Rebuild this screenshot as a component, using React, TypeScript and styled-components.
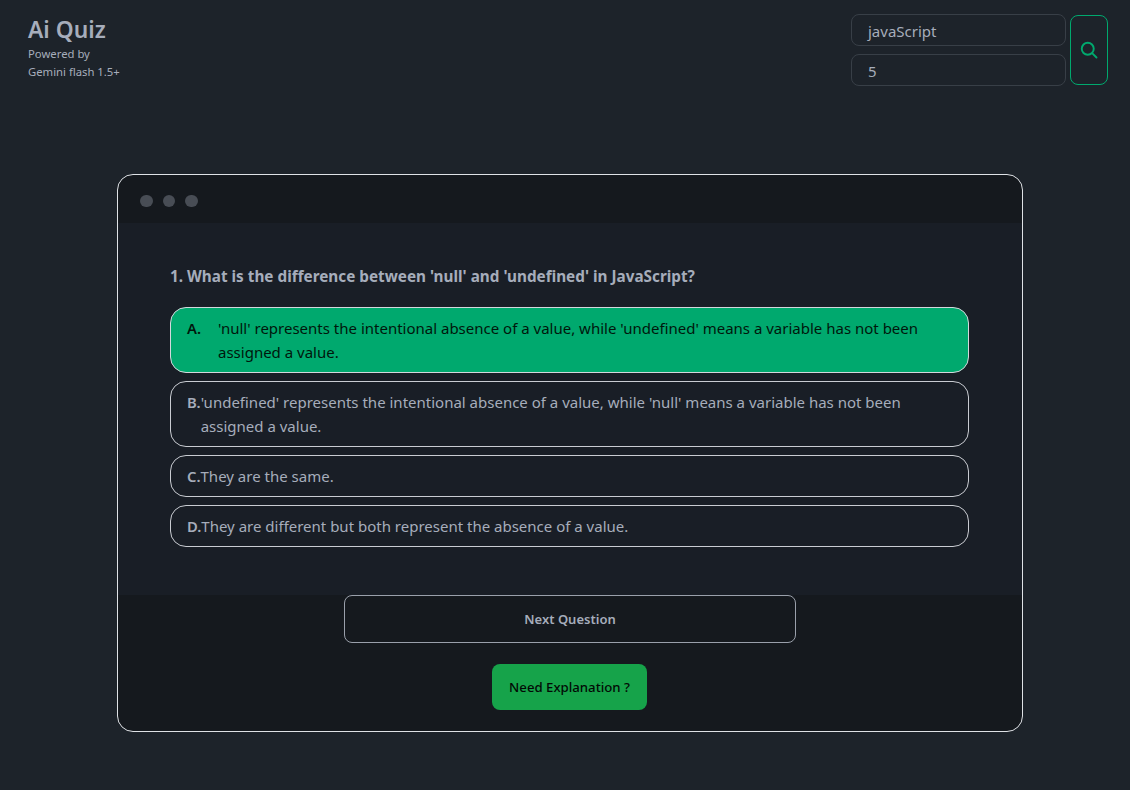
import React from "react";
import styled, { createGlobalStyle } from "styled-components";

const Global = createGlobalStyle`
  html, body { margin: 0; padding: 0; background: #1d232a; }
  body { font-family: "Noto Sans", "Liberation Sans", sans-serif; color: #a6adbb; }
  * { box-sizing: border-box; }
`;
const Page = styled.div`
  width: 1130px; height: 790px; display: flex; flex-direction: column; overflow: hidden;
`;
const Header = styled.header`
  display: flex; justify-content: space-between; align-items: flex-start;
  padding: 14px 22px 0 28px; height: 174px;
`;
const Brand = styled.div`display: flex; flex-direction: column;`;
const Title = styled.h1`
  margin: 0 0 -1px; font-size: 22.8px; line-height: 32px; font-weight: 600; color: #a6adbb;
`;
const Sub = styled.p`margin: 0; font-size: 11.3px; line-height: 18px; color: #a6adbb;`;
const SearchForm = styled.div`display: flex; gap: 4px; align-items: center;`;
const Fields = styled.div`display: flex; flex-direction: column; gap: 8px;`;
const Field = styled.div`
  width: 215px; height: 32px; border: 1px solid #383f47; border-radius: 8px;
  padding: 0 16px; font-size: 15px; line-height: 32px; color: #a6adbb;
`;
const SearchButton = styled.button`
  width: 38px; height: 70px; border: 1px solid #00a96e; border-radius: 8px; background: transparent;
  display: flex; align-items: center; justify-content: center; padding: 0; color: #00a96e;
`;
const Window = styled.main`
  width: 906px; height: 558px; margin-left: 117px; border: 1px solid #dfe2e6; border-radius: 16px;
  background: #15191e; overflow: hidden; display: flex; flex-direction: column;
`;
const TitleBar = styled.div`height: 48px; display: flex; align-items: center; gap: 10px; padding: 4px 0 0 22px;`;
const Dot = styled.span`width: 12.5px; height: 12.5px; border-radius: 50%; background: #484d55;`;
const Body = styled.section`
  height: 372px; background: #191e26; padding: 41px 53px 0 52px;
`;
const Question = styled.h2`
  margin: 0 0 19px; font-size: 15.3px; line-height: 24px; font-weight: 700; color: #a6adbb;
`;
const Options = styled.div`display: flex; flex-direction: column; gap: 8px;`;
const Option = styled.div<{ $selected?: boolean }>`
  display: flex; align-items: baseline; width: 100%; border: 1px solid ${p => (p.$selected ? "#d3d8dc" : "#c9ccd2")};
  border-radius: 16px; padding: 8px 16px; font-size: 15px; line-height: 24px;
  background: ${p => (p.$selected ? "#00a96e" : "transparent")};
  color: ${p => (p.$selected ? "#00170c" : "#a6adbb")};
`;
const Letter = styled.b<{ $wide?: boolean }>`
  flex: none; font-weight: 600; font-size: 14.8px; width: ${p => (p.$wide ? "31px" : "auto")};
`;
const Footer = styled.div`flex: 1; display: flex; flex-direction: column; align-items: center;`;
const NextButton = styled.button`
  width: 452px; height: 48px; border: 1px solid #9aa0ab; border-radius: 8px; background: transparent;
  color: #a6adbb; font: 600 13px "Noto Sans", sans-serif;
`;
const ExplainButton = styled.button`
  width: 155px; height: 46px; margin: 21px 1px 0 0; border: none; border-radius: 8px; background: #16a34a;
  color: #020a05; font: 500 13.2px "Noto Sans", sans-serif;
`;

const options = [
  { l: "A.", t: "'null' represents the intentional absence of a value, while 'undefined' means a variable has not been assigned a value.", s: true },
  { l: "B.", t: "'undefined' represents the intentional absence of a value, while 'null' means a variable has not been assigned a value." },
  { l: "C.", t: "They are the same." },
  { l: "D.", t: "They are different but both represent the absence of a value." },
];

export default function App() {
  return (
    <Page>
      <Global />
      <Header>
        <Brand>
          <Title>Ai Quiz</Title>
          <Sub>Powered by</Sub>
          <Sub>Gemini flash 1.5+</Sub>
        </Brand>
        <SearchForm>
          <Fields>
            <Field>javaScript</Field>
            <Field>5</Field>
          </Fields>
          <SearchButton aria-label="Search">
            <svg width="20" height="20" viewBox="0 0 24 24" fill="none" stroke="currentColor" strokeWidth="2.3" strokeLinecap="round" strokeLinejoin="round">
              <circle cx="10.5" cy="10.5" r="7.2" />
              <path d="M16 16l5 5" />
            </svg>
          </SearchButton>
        </SearchForm>
      </Header>
      <Window>
        <TitleBar><Dot /><Dot /><Dot /></TitleBar>
        <Body>
          <Question>1. What is the difference between 'null' and 'undefined' in JavaScript?</Question>
          <Options>
            {options.map(o => (
              <Option key={o.l} $selected={o.s}>
                <Letter $wide={o.s}>{o.l}</Letter>
                <span>{o.t}</span>
              </Option>
            ))}
          </Options>
        </Body>
        <Footer>
          <NextButton>Next Question</NextButton>
          <ExplainButton>Need Explanation ?</ExplainButton>
        </Footer>
      </Window>
    </Page>
  );
}
